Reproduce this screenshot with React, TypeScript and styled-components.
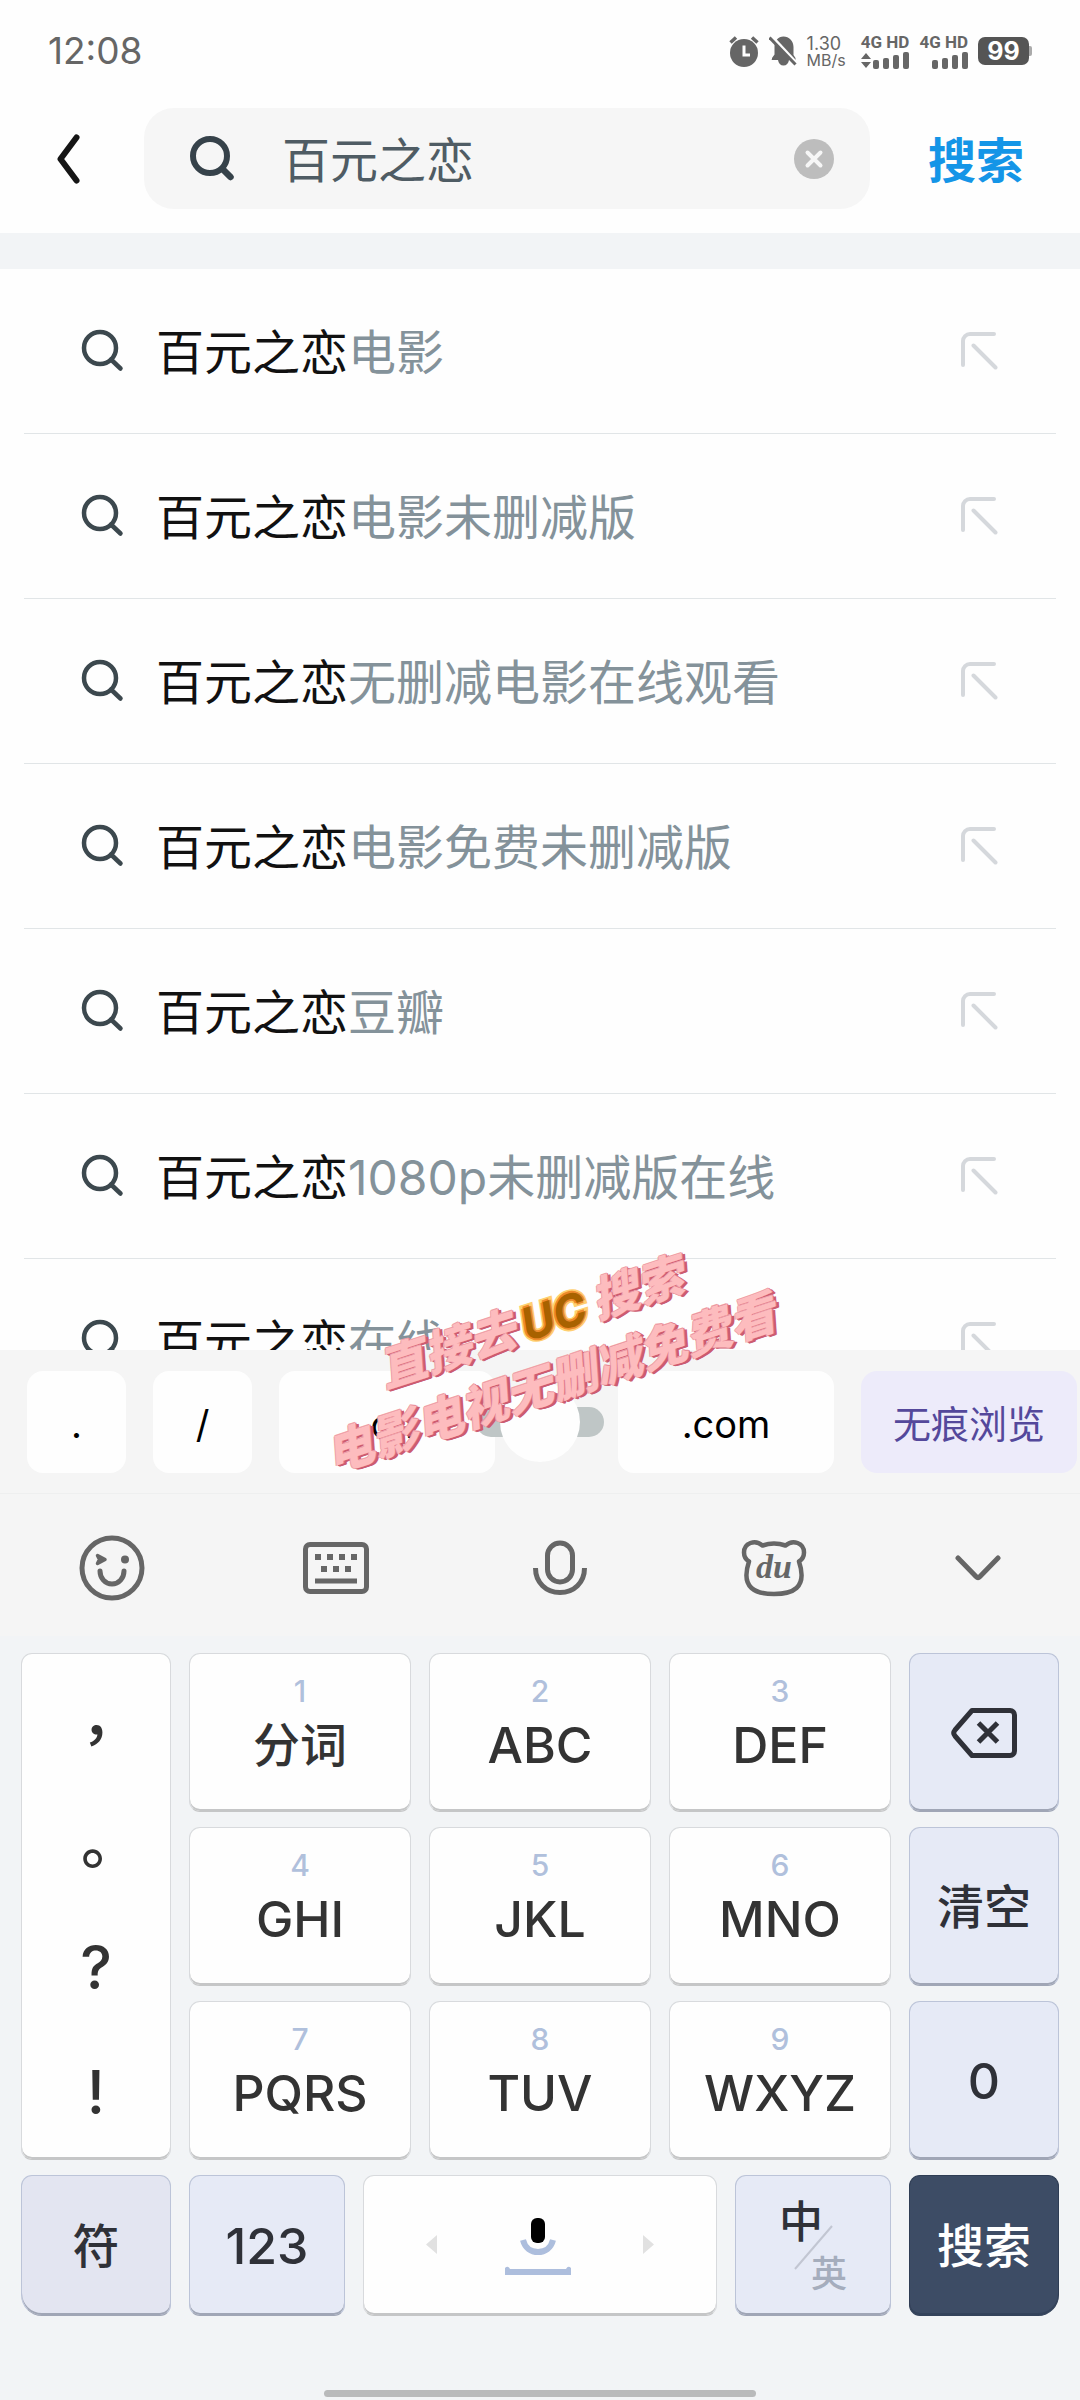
import React, { useState } from "react";
import styled, { createGlobalStyle, css } from "styled-components";

const GlobalStyle = createGlobalStyle`
  *, *::before, *::after { box-sizing: border-box; }
  html, body { margin: 0; padding: 0; background: #fefefe; }
  body, button, input {
    font-family: "Inter", "Noto Sans CJK SC", sans-serif;
  }
  button {
    margin: 0;
    padding: 0;
    border: 0;
    background: none;
    color: inherit;
    cursor: pointer;
  }
  svg { display: block; }
`;

const Page = styled.div`
  display: flex;
  flex-direction: column;
  height: 100vh;
  overflow: hidden;
  background: #fefefe;
`;

/* ---------- status bar ---------- */

const StatusBar = styled.div`
  display: flex;
  align-items: center;
  justify-content: space-between;
  flex: none;
  height: 102px;
  padding: 0 48px;
  color: #666;
`;

const Clock = styled.time`
  font-size: 37px;
  line-height: 40px;
`;

const StatusIcons = styled.div`
  display: flex;
  align-items: center;
  gap: 10px;
`;

const Speed = styled.div`
  display: flex;
  flex-direction: column;
  padding-right: 5px;
  font-size: 18px;
  line-height: 17px;
  small {
    font-size: 16px;
    line-height: 16px;
  }
`;

const Signal = styled.div`
  display: flex;
  flex-direction: column;
  align-items: flex-end;
  gap: 2px;
  font-family: "Liberation Sans Narrow", "Roboto", sans-serif;
  font-size: 17px;
  font-weight: 700;
  line-height: 16px;
`;

const Battery = styled.div`
  display: flex;
  align-items: center;
  span {
    display: grid;
    place-items: center;
    width: 51px;
    height: 28px;
    border-radius: 7px;
    background: #555;
    color: #fff;
    font-size: 25px;
    font-weight: 700;
    line-height: 28px;
  }
  &::after {
    content: "";
    width: 3px;
    height: 10px;
    border-radius: 0 2px 2px 0;
    background: #aaa;
  }
`;

/* ---------- search header ---------- */

const Header = styled.form`
  display: flex;
  align-items: center;
  flex: none;
  padding: 6px 56px 24px 56px;
`;

const SearchBox = styled.label`
  display: flex;
  align-items: center;
  flex: 1;
  min-width: 0;
  height: 101px;
  margin: 0 58px 0 64px;
  padding: 0 36px 0 46px;
  border-radius: 30px;
  background: #f6f6f6;
`;

const SearchInput = styled.input`
  flex: 1;
  min-width: 0;
  margin-left: 46px;
  padding: 4px 0 0;
  border: 0;
  outline: 0;
  background: transparent;
  color: #4f5c64;
  font-size: 48px;
  line-height: 60px;
`;

const SubmitButton = styled.button`
  padding-top: 4px;
  color: #1495e7;
  font-size: 48px;
  font-weight: 700;
  line-height: 60px;
`;

const Band = styled.div`
  flex: none;
  height: 36px;
  background: #f2f4f6;
`;

/* ---------- suggestions ---------- */

const Suggestions = styled.ul`
  flex: 1;
  min-height: 0;
  margin: 0;
  padding: 0 24px;
  overflow: hidden;
  list-style: none;
`;

const Suggestion = styled.li`
  display: flex;
  align-items: center;
  justify-content: space-between;
  height: 165px;
  padding: 0 58px 0 56px;
  border-bottom: 1px solid #e1e5e7;
`;

const SuggestionButton = styled.button`
  display: flex;
  align-items: center;
  gap: 32px;
  color: #84929a;
  font-size: 48px;
  line-height: 60px;
  span { padding-top: 4px; }
  b {
    color: #111;
    font-weight: 400;
  }
`;

/* ---------- keyboard ---------- */

const Keyboard = styled.section`
  position: relative;
  flex: none;
  background: #f2f4f6;
`;

const ChipBar = styled.div`
  position: relative;
  display: flex;
  align-items: center;
  justify-content: space-between;
  height: 144px;
  padding: 0 3px 0 27px;
  border-bottom: 1px solid #eeefef;
  background: #f5f5f5;
`;

const ChipGroup = styled.div`
  display: flex;
  gap: 27px;
`;

const Chip = styled.button<{ $wide?: boolean; $accent?: boolean }>`
  width: ${(p) => (p.$wide ? 216 : 99)}px;
  height: 102px;
  padding-top: 4px;
  border-radius: 16px;
  background: ${(p) => (p.$accent ? "#edebfa" : "#fefefe")};
  color: ${(p) => (p.$accent ? "#54489b" : "#000")};
  font-size: 38px;
  line-height: 48px;
`;

const CursorSlider = styled.input`
  position: absolute;
  left: 50%;
  top: 50%;
  width: 128px;
  height: 80px;
  margin: 0;
  transform: translate(-50%, -50%);
  appearance: none;
  background: transparent;
  &::-webkit-slider-runnable-track {
    height: 30px;
    border-radius: 15px;
    background: #bfc6c6;
  }
  &::-webkit-slider-thumb {
    appearance: none;
    width: 80px;
    height: 80px;
    margin-top: -25px;
    border: 0;
    border-radius: 50%;
    background: #fefefe;
  }
`;

const Toolbar = styled.div`
  display: grid;
  grid-template-columns: 224fr 224fr 224fr 204fr 204fr;
  height: 142px;
  padding-top: 5px;
  background: #f5f5f5;
  color: #666;
`;

const Tool = styled.button`
  display: grid;
  place-items: center;
`;

const Keys = styled.div`
  display: grid;
  gap: 15px;
  padding: 17px 21px 74px;
`;

const MainKeys = styled.div`
  display: grid;
  grid-template-columns: 150fr 222fr 222fr 222fr 150fr;
  grid-auto-rows: 159px;
  gap: 15px 18px;
`;

const BottomKeys = styled.div`
  display: grid;
  grid-template-columns: 150fr 156fr 354fr 156fr 150fr;
  grid-auto-rows: 141px;
  gap: 18px;
`;

type Tone = "plain" | "soft" | "muted" | "dark";

const tones: Record<Tone, { bg: string; line: string; lip: string; ink: string }> = {
  plain: { bg: "#fefefe", line: "#d8dadd", lip: "#c5c6c7", ink: "#333" },
  soft: { bg: "#e6eaf6", line: "#bcc4d8", lip: "#a0a6b6", ink: "#2f3138" },
  muted: { bg: "#e3e5f1", line: "#bcc4d8", lip: "#a0a6b6", ink: "#2f3138" },
  dark: { bg: "#3d4c65", line: "#2f3d54", lip: "#34435b", ink: "#fff" },
};

const keySurface = css<{ $tone?: Tone }>`
  ${(p) => {
    const t = tones[p.$tone ?? "plain"];
    return css`
      border: 1px solid ${t.line};
      border-bottom-color: ${t.lip};
      background: ${t.bg};
      color: ${t.ink};
      box-shadow: inset 0 -2px 0 ${t.lip};
    `;
  }}
  border-radius: 11px;
`;

const Key = styled.button<{ $tone?: Tone; $corner?: "left" | "right"; $latin?: boolean }>`
  ${keySurface}
  display: grid;
  place-items: center;
  font-size: ${(p) => (p.$latin ? 50 : 47)}px;
  font-weight: 500;
  line-height: 60px;
  ${(p) => p.$corner === "left" && "border-bottom-left-radius: 21px;"}
  ${(p) => p.$corner === "right" && "border-bottom-right-radius: 21px;"}
`;

const LetterKey = styled.button<{ $latin: boolean }>`
  ${keySurface}
  display: flex;
  flex-direction: column;
  align-items: center;
  justify-content: flex-start;
  gap: 14px;
  padding-top: 22px;
  font-size: ${(p) => (p.$latin ? 50 : 47)}px;
  font-weight: 500;
  line-height: 50px;
  small {
    color: #b0c0dc;
    font-size: 30px;
    line-height: 30px;
  }
`;

const PunctuationColumn = styled.div`
  ${keySurface}
  display: grid;
  grid-row: span 3;
  grid-template-rows: repeat(4, 1fr);
  padding-bottom: 4px;
`;

const Punctuation = styled.button`
  font-size: 60px;
  font-weight: 500;
  line-height: 60px;
  font-feature-settings: "halt";
`;

const LanguageSwitch = styled.span`
  position: relative;
  display: grid;
  gap: 12px;
  width: 68px;
  span {
    justify-self: start;
    font-size: 44px;
    line-height: 44px;
  }
  small {
    justify-self: end;
    color: #a5adbd;
    font-size: 36px;
    line-height: 36px;
  }
  svg {
    position: absolute;
    inset: 0;
  }
`;

const HomeBar = styled.div`
  width: 40%;
  height: 7px;
  margin: 0 auto 3px;
  border-radius: 4px;
  background: #b9babb;
`;

/* ---------- sticker ---------- */

const Sticker = styled.p`
  position: absolute;
  left: 50%;
  top: 0;
  z-index: 2;
  margin: 0;
  transform: translate(-50%, -50%) rotate(-18deg);
  color: #fdbcbe;
  font-family: "Noto Sans CJK SC", sans-serif;
  font-size: 47px;
  font-style: italic;
  font-weight: 900;
  line-height: 60px;
  text-align: center;
  white-space: nowrap;
  pointer-events: none;
  text-shadow: 1px 0 0 #dd7a8a, -1px 0 0 #f0a0a8, 0 -1px 0 #f0a0a8, 1px 1px 0 #cc5c70, 2px 2px 0 #cc5c70, 3px 2px 0 #cc5c70;
`;

const StickerLine = styled.span`
  display: block;
  em {
    margin: 0 8px;
    color: #a86200;
    font-family: "Inter", sans-serif;
    font-size: 45px;
    font-weight: 700;
    -webkit-text-stroke: 7px #ffcf70;
    paint-order: stroke fill;
    text-shadow: 2px 0 0 #ee8a2c, -2px 0 0 #ee8a2c, 0 2px 0 #ee8a2c, 0 -2px 0 #ee8a2c;
  }
`;

/* ---------- icons ---------- */

const AlarmIcon = () => (
  <svg width="30" height="32" viewBox="0 0 30 32" aria-hidden="true">
    <circle cx="15" cy="18" r="14" fill="#666" />
    <path d="M1.500 7.500 7 2.500M28.500 7.500 23 2.500" stroke="#666" strokeWidth="3.500" />
    <path d="M15 10.500v9.500h6" stroke="#fefefe" strokeWidth="3" fill="none" />
  </svg>
);

const MutedBellIcon = () => (
  <svg width="28" height="32" viewBox="0 0 28 32" aria-hidden="true">
    <path
      d="M3 24.500V23l2.500-3.500V12C5.500 6 9 1.500 14.500 1.500S24.500 6 24.500 12v8l2 3v2H20c-.5 3.500-2.500 5.500-5.500 5.500S9.500 28.500 9 25H2z"
      fill="#666"
    />
    <path d="M3 1.500 29 29.500" stroke="#fefefe" strokeWidth="3" />
    <path d="M.5 2.500 26.500 29.500" stroke="#666" strokeWidth="3" />
  </svg>
);

const SignalBars = ({ traffic }: { traffic?: boolean }) => (
  <svg width="48" height="17" viewBox="0 0 48 17" fill="#666" aria-hidden="true">
    {traffic && <path d="M0 7 5 1l5 6zM0 10h10l-5 6z" />}
    <rect x="12" y="8" width="6" height="9" rx="2" />
    <rect x="22" y="6" width="6" height="11" rx="2" />
    <rect x="32" y="3" width="6" height="14" rx="2" />
    <rect x="42" y="0" width="6" height="17" rx="2" />
  </svg>
);

const BackIcon = () => (
  <svg width="24" height="50" viewBox="0 0 24 50" fill="none" aria-hidden="true">
    <path d="M20.500 3.500 4.500 25l16 21.500" stroke="#151515" strokeWidth="6" strokeLinecap="round" strokeLinejoin="round" />
  </svg>
);

const BoldSearchIcon = () => (
  <svg width="46" height="46" viewBox="0 0 46 46" fill="none" stroke="#36424a" aria-hidden="true">
    <circle cx="20" cy="20" r="17" strokeWidth="6" />
    <path d="M33 33.500 40.500 41" strokeWidth="6.500" strokeLinecap="round" />
  </svg>
);

const SearchIcon = () => (
  <svg width="44" height="44" viewBox="0 0 44 44" fill="none" stroke="#3c484e" aria-hidden="true">
    <circle cx="20" cy="19" r="16" strokeWidth="4.500" />
    <path d="M31 30.500 40.500 39.500" strokeWidth="4.500" strokeLinecap="round" />
  </svg>
);

const ClearIcon = () => (
  <svg width="40" height="40" viewBox="0 0 40 40" aria-hidden="true">
    <circle cx="20" cy="20" r="20" fill="#bdbdbd" />
    <path d="m13.500 13.500 13 13M26.500 13.500l-13 13" stroke="#f6f6f6" strokeWidth="4" strokeLinecap="round" />
  </svg>
);

const FillArrowIcon = () => (
  <svg width="38" height="38" viewBox="0 0 38 38" fill="none" stroke="#d5d8dc" strokeWidth="4" strokeLinecap="round" aria-hidden="true">
    <path d="M34 2H10a7 7 0 0 0-7 7v24M13.500 13.500 35.500 35.500" />
  </svg>
);

const SmileIcon = () => (
  <svg width="66" height="66" viewBox="0 0 66 66" fill="none" stroke="#666" strokeWidth="5" aria-hidden="true">
    <circle cx="33" cy="33" r="30" />
    <path d="M21 36c0 7 5 13 12 13s12-6 12-13" strokeLinecap="round" />
    <path d="M18.500 20.500 26 24.500 18.500 28.500 20.500 24.500z" fill="#666" strokeWidth="3.500" strokeLinejoin="round" />
    <circle cx="46" cy="24.500" r="4" fill="#666" stroke="none" />
  </svg>
);

const KeyboardIcon = () => (
  <svg width="66" height="52" viewBox="0 0 66 52" fill="#666" aria-hidden="true">
    <rect x="2.500" y="2.500" width="61" height="47" rx="4.500" fill="none" stroke="#666" strokeWidth="5" />
    {[12, 24, 36, 48].map((x) => <rect key={x} x={x} y="12" width="6" height="6" />)}
    {[18, 30, 42].map((x) => <rect key={x} x={x} y="24" width="6" height="6" />)}
    <rect x="12" y="36.500" width="42" height="5" />
  </svg>
);

const MicIcon = () => (
  <svg width="54" height="56" viewBox="0 0 54 56" fill="none" stroke="#666" strokeWidth="5" aria-hidden="true">
    <rect x="14.500" y="3" width="25" height="39" rx="12.500" />
    <path d="M2.500 28C2.500 42.500 13 52.500 27 52.500S51.500 42.500 51.500 28" />
  </svg>
);

const BearIcon = () => (
  <svg width="66" height="58" viewBox="0 0 66 58" aria-hidden="true">
    <path
      d="M21.500 6.500C14 0 3 4 3 13.500c0 4 1.800 7 5 9C3.500 36 5 44 10.500 49c5 4.500 13 6 22.500 6s17.500-1.500 22.500-6C61 44 62.500 36 58 22.500c3.200-2 5-5 5-9C63 4 52 0 44.500 6.500 37 4 29 4 21.500 6.500z"
      fill="none"
      stroke="#666"
      strokeWidth="4.500"
      strokeLinejoin="round"
    />
    <text x="33" y="39" textAnchor="middle" fill="#666" fontFamily="Liberation Serif, serif" fontSize="34" fontStyle="italic" fontWeight="700">
      du
    </text>
  </svg>
);

const CollapseIcon = () => (
  <svg width="46" height="26" viewBox="0 0 46 26" fill="none" aria-hidden="true">
    <path d="M3 3 21 21.500q2 2 4 0L43 3" stroke="#666" strokeWidth="5" strokeLinecap="round" />
  </svg>
);

const BackspaceIcon = () => (
  <svg width="66" height="50" viewBox="0 0 66 50" fill="none" stroke="#2f3138" strokeWidth="5" strokeLinejoin="round" aria-hidden="true">
    <path d="M21 2.500H59a4.500 4.500 0 0 1 4.500 4.500v36a4.500 4.500 0 0 1-4.500 4.500H21L4 28q-2.500-3 0-6z" />
    <path d="m27.500 15 19 19M46.500 15l-19 19" />
  </svg>
);

const SpaceIcon = () => (
  <svg width="228" height="60" viewBox="0 0 228 60" aria-hidden="true">
    <path d="M0 28.500 11 19v19zM228 28.500 217 19v19z" fill="#e1e1e1" />
    <rect x="105" y="2" width="14" height="25" rx="6" fill="#000" />
    <path d="M97 24c2 8 8 12 15 12s13-4 15-12" fill="none" stroke="#adbedd" strokeWidth="6" />
    <path d="M79 59v-7q3-3 5 1h56q2-4 5-1v7z" fill="#adbedd" />
  </svg>
);

/* ---------- content ---------- */

const query = "百元之恋";

const completions = [
  "电影",
  "电影未删减版",
  "无删减电影在线观看",
  "电影免费未删减版",
  "豆瓣",
  "1080p未删减版在线",
  "在线",
];

const letterRows: { keys: [string, string][]; side: React.ReactNode; label: string; latin?: boolean }[] = [
  { keys: [["1", "分词"], ["2", "ABC"], ["3", "DEF"]], side: <BackspaceIcon />, label: "删除" },
  { keys: [["4", "GHI"], ["5", "JKL"], ["6", "MNO"]], side: "清空", label: "清空" },
  { keys: [["7", "PQRS"], ["8", "TUV"], ["9", "WXYZ"]], side: "0", label: "0", latin: true },
];

export default function App() {
  const [text, setText] = useState(query);

  return (
    <Page>
      <GlobalStyle />
      <StatusBar>
        <Clock>12:08</Clock>
        <StatusIcons>
          <AlarmIcon />
          <MutedBellIcon />
          <Speed>
            1.30<small>MB/s</small>
          </Speed>
          <Signal>
            4G HD
            <SignalBars traffic />
          </Signal>
          <Signal>
            4G HD
            <SignalBars />
          </Signal>
          <Battery>
            <span>99</span>
          </Battery>
        </StatusIcons>
      </StatusBar>

      <Header onSubmit={(e) => e.preventDefault()}>
        <button type="button" aria-label="返回">
          <BackIcon />
        </button>
        <SearchBox>
          <BoldSearchIcon />
          <SearchInput aria-label="搜索" value={text} onChange={(e) => setText(e.target.value)} />
          <button type="button" aria-label="清除" onClick={() => setText("")}>
            <ClearIcon />
          </button>
        </SearchBox>
        <SubmitButton type="submit">搜索</SubmitButton>
      </Header>
      <Band />

      <Suggestions>
        {completions.map((rest) => (
          <Suggestion key={rest}>
            <SuggestionButton type="button" onClick={() => setText(query + rest)}>
              <SearchIcon />
              <span>
                <b>{query}</b>
                {rest}
              </span>
            </SuggestionButton>
            <button type="button" aria-label="填入" onClick={() => setText(query + rest)}>
              <FillArrowIcon />
            </button>
          </Suggestion>
        ))}
      </Suggestions>

      <Keyboard>
        <ChipBar>
          <ChipGroup>
            <Chip type="button">.</Chip>
            <Chip type="button">/</Chip>
            <Chip type="button" $wide>.cn</Chip>
          </ChipGroup>
          <ChipGroup>
            <Chip type="button" $wide>.com</Chip>
            <Chip type="button" $wide $accent>无痕浏览</Chip>
          </ChipGroup>
          <CursorSlider type="range" aria-label="移动光标" defaultValue={50} />
        </ChipBar>

        <Toolbar>
          <Tool type="button" aria-label="表情"><SmileIcon /></Tool>
          <Tool type="button" aria-label="键盘"><KeyboardIcon /></Tool>
          <Tool type="button" aria-label="语音"><MicIcon /></Tool>
          <Tool type="button" aria-label="输入法"><BearIcon /></Tool>
          <Tool type="button" aria-label="收起"><CollapseIcon /></Tool>
        </Toolbar>

        <Keys>
          <MainKeys>
            <PunctuationColumn>
              {["，", "。", "?", "!"].map((mark) => (
                <Punctuation type="button" key={mark}>{mark}</Punctuation>
              ))}
            </PunctuationColumn>
            {letterRows.map((row) => (
              <React.Fragment key={row.label}>
                {row.keys.map(([digit, letters]) => (
                  <LetterKey type="button" key={digit} $latin={digit !== "1"}>
                    <small>{digit}</small>
                    {letters}
                  </LetterKey>
                ))}
                <Key type="button" $tone="soft" $latin={row.latin} aria-label={row.label}>
                  {row.side}
                </Key>
              </React.Fragment>
            ))}
          </MainKeys>
          <BottomKeys>
            <Key type="button" $tone="muted" $corner="left">符</Key>
            <Key type="button" $tone="soft" $latin>123</Key>
            <Key type="button" aria-label="空格"><SpaceIcon /></Key>
            <Key type="button" $tone="soft">
              <LanguageSwitch>
                <span>中</span>
                <small>英</small>
                <svg width="68" height="92" viewBox="0 0 68 92" aria-hidden="true">
                  <path d="M16 69 53 26" stroke="#c2c6d2" strokeWidth="2" />
                </svg>
              </LanguageSwitch>
            </Key>
            <Key type="button" $tone="dark" $corner="right">搜索</Key>
          </BottomKeys>
        </Keys>
        <HomeBar />

        <Sticker>
          <StickerLine>
            直接去<em>UC</em>搜索
          </StickerLine>
          <StickerLine>电影电视无删减免费看</StickerLine>
        </Sticker>
      </Keyboard>
    </Page>
  );
}
